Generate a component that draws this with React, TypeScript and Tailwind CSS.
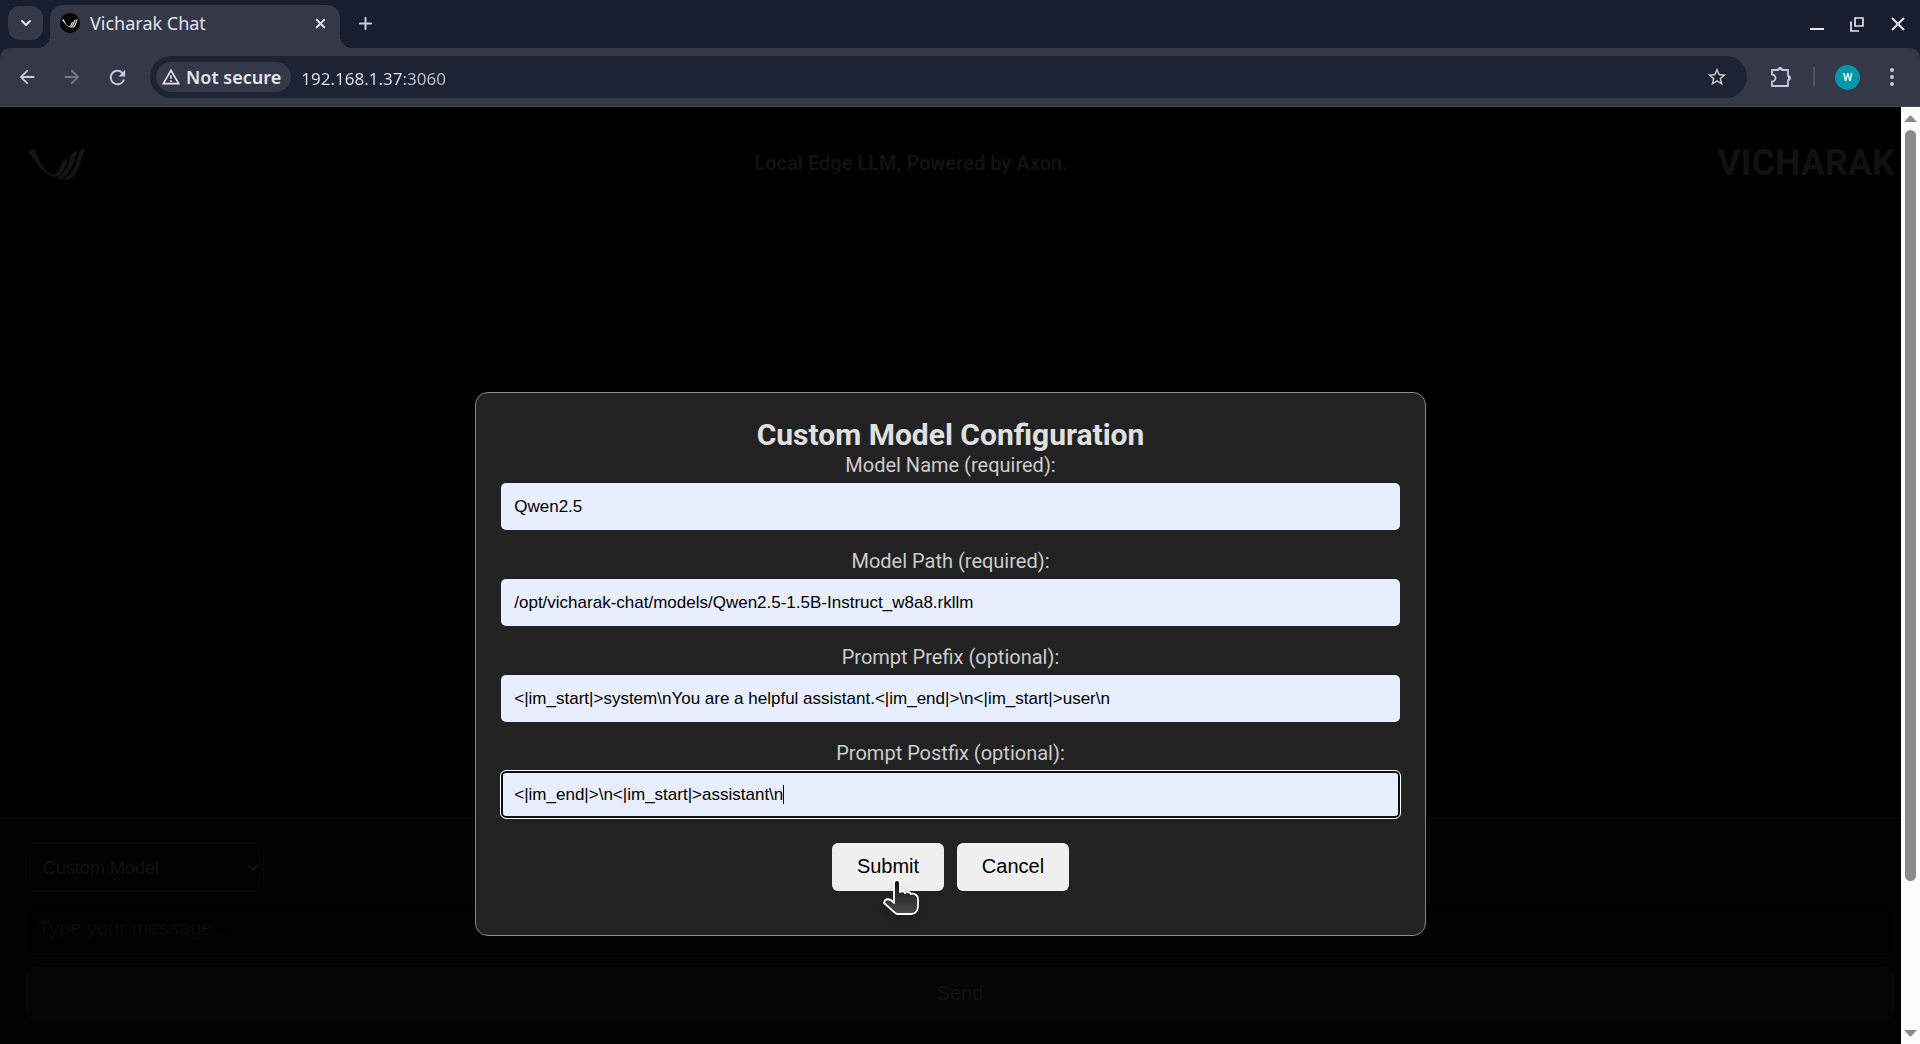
import React from "react";
import { ChevronDown, Plus, X } from "lucide-react";
import { MdArrowBack, MdArrowForward, MdRefresh, MdStarBorder, MdOutlineWarningAmber } from "react-icons/md";

function Wing({ className }: { className?: string }) {
  return (
    <svg viewBox="0 0 174 98" className={className} fill="currentColor" aria-hidden="true">
      <path d="M0 12 L19 1 C31 32 50 79 76 79 C88 78 94 62 101 45 C104 37 111 33 120 34 C114 54 108 68 98 79 C90 86 80 88 70 85 C46 76 22 40 0 12Z" />
      <path d="M151 9 C138 9 131 14 127 27 C121 50 110 78 86 91 C94 96 102 95 107 91 C132 72 136 36 151 9Z" />
      <path d="M173 0 C160 3 154 9 151 22 C145 48 134 78 107 95 C127 97 141 84 151 62 C160 42 162 20 173 0Z" />
    </svg>
  );
}

function BrowserTabs() {
  return (
    <div className="flex h-12 items-stretch bg-[#191d30] text-[#e3e3ee]">
      <button aria-label="Search tabs" className="ml-2 mt-[6px] flex h-[34px] w-[35px] items-center justify-center rounded-xl bg-[#353849]">
        <ChevronDown className="size-4" strokeWidth={3} />
      </button>
      <div className="relative ml-[7px] mt-[5px] flex w-[290px] items-center rounded-t-[13px] bg-[#353849] pb-[7px] pl-[10px] pr-3">
        <span className="absolute -left-3 bottom-0 size-3 bg-[radial-gradient(circle_at_top_left,transparent_12px,#353849_12px)]" />
        <span className="absolute -right-3 bottom-0 size-3 bg-[radial-gradient(circle_at_top_right,transparent_12px,#353849_12px)]" />
        <span className="flex size-5 items-center justify-center rounded-full bg-black text-[#dddddd]">
          <Wing className="w-4" />
        </span>
        <span className="ml-[10px] flex-1 text-[18px] leading-6">Vicharak Chat</span>
        <button aria-label="Close tab">
          <X className="size-[15px]" strokeWidth={3} />
        </button>
      </div>
      <button aria-label="New tab" className="ml-4 flex w-[19px] items-center justify-center pb-[2px] text-[#c7c8e4]">
        <Plus className="size-[19px]" strokeWidth={2.6} />
      </button>
      <div className="flex-1" />
      <button aria-label="Minimize" className="mr-[26px]">
        <svg viewBox="0 0 14 14" className="size-[14px]" stroke="currentColor" strokeWidth="2"><path d="M0 12H14" /></svg>
      </button>
      <button aria-label="Restore" className="mr-[27px]">
        <svg viewBox="0 0 14 15" className="h-[15px] w-[14px]" fill="none" stroke="currentColor" strokeWidth="1.700"><path d="M5 1H13V9H5ZM1 4.500V14H9" /></svg>
      </button>
      <button aria-label="Close window" className="mr-[15px]">
        <svg viewBox="0 0 14 14" className="size-[14px]" stroke="currentColor" strokeWidth="2"><path d="M1 1L13 13M13 1L1 13" /></svg>
      </button>
    </div>
  );
}

function Toolbar() {
  return (
    <div className="bg-[#191d30]">
      <div className="flex h-[59px] items-center rounded-t-[10px] border-b border-[#474a59] bg-[#353849] pl-4 text-[#c7c8e4]">
        <button aria-label="Back"><MdArrowBack className="size-[22px]" /></button>
        <button aria-label="Forward" className="ml-[23px] text-[#777a8f]"><MdArrowForward className="size-[22px]" /></button>
        <button aria-label="Reload" className="ml-[23px]"><MdRefresh className="size-[23px]" /></button>
        <div className="ml-[21px] flex h-[42px] flex-1 items-center rounded-full bg-[#1e2235] pl-[6px] pr-[19px]">
          <button className="flex h-[30px] items-center rounded-full bg-[#353849] pl-[5px] pr-[10px] text-[18px] font-semibold text-[#e3e3ee]">
            <MdOutlineWarningAmber className="mr-[5px] size-5 shrink-0" />
            <span className="whitespace-nowrap">Not secure</span>
          </button>
          <input
            aria-label="Address"
            defaultValue="192.168.1.37:3060"
            className="ml-[10px] h-[30px] min-w-0 flex-1 bg-[linear-gradient(90deg,#e3e3ee_103px,#c0c1cc_103px)] bg-clip-text pt-[2px] text-[17px] text-transparent outline-none"
          />
          <button aria-label="Bookmark"><MdStarBorder className="size-[22px] text-[#c9c9cf]" /></button>
        </div>
        <button aria-label="Extensions" className="ml-[23px]">
          <svg viewBox="0 0 22 22" className="size-[22px]" fill="none" stroke="currentColor" strokeWidth="1.800" strokeLinejoin="round">
            <path d="M2 4H8A2 2 0 0 1 12 4H18V10A2 2 0 0 1 18 14V20H2V15.500A3 3 0 0 0 2 8.500Z" />
            <path fill="currentColor" stroke="none" d="M8 4A2.200 2.200 0 0 1 12.400 4ZM18 9.500A2.400 2.400 0 0 1 18 14.300Z" />
          </svg>
        </button>
        <span className="ml-[21px] h-5 w-[2px] bg-[#4d5068]" />
        <button aria-label="Profile" className="ml-5 flex size-[25px] items-center justify-center rounded-full bg-[#0097a7] font-['Roboto'] text-[11px] font-medium leading-none text-white">W</button>
        <button aria-label="Menu" className="ml-[22px] mr-[18px]">
          <svg viewBox="0 0 20 20" className="size-5" fill="currentColor"><circle cx="10" cy="3" r="2" /><circle cx="10" cy="10" r="2" /><circle cx="10" cy="17" r="2" /></svg>
        </button>
      </div>
    </div>
  );
}

const fields = [
  { id: "name", label: "Model Name (required):", value: "Qwen2.5" },
  { id: "path", label: "Model Path (required):", value: "/opt/vicharak-chat/models/Qwen2.5-1.5B-Instruct_w8a8.rkllm" },
  { id: "prefix", label: "Prompt Prefix (optional):", value: "<|im_start|>system\\nYou are a helpful assistant.<|im_end|>\\n<|im_start|>user\\n" },
  { id: "postfix", label: "Prompt Postfix (optional):", value: "<|im_end|>\\n<|im_start|>assistant\\n", active: true },
];

function HandPointer() {
  return (
    <svg viewBox="0 0 36 38" className="absolute left-[51px] top-[35px] h-[38px] w-9 drop-shadow-md" aria-hidden="true">
      <defs>
        <linearGradient id="hand" x1="0" y1="0" x2="0" y2="1"><stop offset="0" stopColor="#111" /><stop offset="1" stopColor="#4a4a4a" /></linearGradient>
      </defs>
      <path d="M11 5C11 1 17 1 17 5V14C19 13 21 13 22 15C24 13 27 14 28 16C31 15 35 17 35 21V28C35 33 32 36 28 36H14C10 34 5 28 1 25C2 20 7 20 11 25Z" fill="url(#hand)" stroke="#fff" strokeWidth="1.800" strokeLinejoin="round" />
    </svg>
  );
}

function ModelDialog() {
  return (
    <form
      role="dialog"
      aria-labelledby="dialog-title"
      onSubmit={(e) => e.preventDefault()}
      className="absolute inset-x-0 top-0 mx-auto mt-[15%] w-1/2 rounded-[13px] border border-[#888888] bg-[#222222] px-[25px] pb-11 pt-6 text-center font-['Roboto',sans-serif]"
    >
      <h2 id="dialog-title" className="mb-px text-[30px] font-bold leading-[35px] text-[#e0e0e0]">Custom Model Configuration</h2>
      {fields.map((f) => (
        <div key={f.id} className="relative mb-[19px]">
          <label htmlFor={f.id} className="mb-[6px] block text-[20px] leading-6 text-[#cccccc]">{f.label}</label>
          <input
            id={f.id}
            defaultValue={f.value}
            className={
              f.active
                ? "block h-[47px] w-full rounded-[5px] bg-[#e8eefe] px-[13px] font-['Liberation_Sans',sans-serif] text-[17px] text-black outline outline-white inset-shadow-[0_0_0_2px_#101010]"
                : "block h-[47px] w-full rounded-[5px] bg-[#e8eefe] px-[13px] font-['Liberation_Sans',sans-serif] text-[17px] text-black"
            }
          />
          {f.active && <span className="absolute bottom-[14px] left-[282px] h-[19px] w-px bg-black" />}
        </div>
      ))}
      <div className="mt-[25px] flex justify-center gap-[13px] font-['Liberation_Sans',sans-serif] text-[20px] text-black">
        <div className="relative">
          <button type="submit" className="h-12 w-28 rounded-[6px] bg-[#efefef] pb-[2px]">Submit</button>
          <HandPointer />
        </div>
        <button type="button" className="h-12 w-28 rounded-[6px] bg-[#efefef] pb-[2px]">Cancel</button>
      </div>
    </form>
  );
}

function ChatPage() {
  return (
    <main className="relative flex flex-1 flex-col bg-black font-['Liberation_Sans',sans-serif] text-[#111111]">
      <header className="flex items-center justify-between pl-[25px] pr-[6px] pt-[34px] font-['Roboto',sans-serif] font-bold">
        <div className="w-20 pl-[3px] pt-[2px]"><Wing className="w-[58px] text-[#151515]" /></div>
        <p className="text-[20px]">Local Edge LLM, Powered by Axon.</p>
        <h1 className="text-[36px] leading-[44px]">VICHARAK</h1>
      </header>
      <div className="flex-1" />
      <footer className="flex flex-col border-t border-[#050505] bg-[#020202] pb-6 pl-[25px] pr-[6px] pt-[25px]">
        <div className="relative w-[239px]">
          <select aria-label="Model" className="h-[49px] w-full appearance-none rounded-[6px] border border-[#060606] bg-[#020202] pl-[17px] pt-[2px] text-[18px]">
            <option>Custom Model</option>
          </select>
          <ChevronDown className="pointer-events-none absolute right-[3px] top-[17px] size-4 text-[#161616]" strokeWidth={3} />
        </div>
        <input aria-label="Message" placeholder="Type your message..." className="mt-[13px] h-[50px] rounded-[6px] border border-[#060606] bg-[#010101] px-3 pb-1 text-[20px] placeholder:text-[#0b0b0b]" />
        <button className="mt-3 h-[53px] rounded-[10px] bg-[#050505] pb-[2px] text-[20px]">Send</button>
      </footer>
      <ModelDialog />
    </main>
  );
}

export default function App() {
  return (
    <div className="flex min-h-screen flex-col bg-black font-['Noto_Sans',sans-serif]">
      <BrowserTabs />
      <Toolbar />
      <div className="flex flex-1">
        <ChatPage />
        <div className="flex w-[19px] flex-col items-center bg-[#fcfcfc] pb-[7px] pt-2 text-[#8b8b8b]">
          <svg viewBox="0 0 13 7" className="h-[7px] w-[13px]" fill="currentColor"><path d="M0 7L6.500 0L13 7Z" /></svg>
          <div className="mb-[149px] mt-2 w-[11px] flex-1 rounded-full bg-[#8b8b8b]" />
          <svg viewBox="0 0 13 7" className="h-[7px] w-[13px]" fill="currentColor"><path d="M0 0L6.500 7L13 0Z" /></svg>
        </div>
      </div>
    </div>
  );
}
